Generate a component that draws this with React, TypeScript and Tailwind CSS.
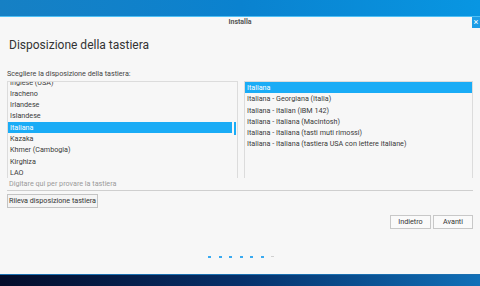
const layouts = [
	"Inglese (USA)",
	"Iracheno",
	"Irlandese",
	"Islandese",
	"Italiana",
	"Kazaka",
	"Khmer (Cambogia)",
	"Kirghiza",
	"LAO",
];

const variants = [
	"Italiana",
	"Italiana - Georgiana (Italia)",
	"Italiana - Italian (IBM 142)",
	"Italiana - Italiana (Macintosh)",
	"Italiana - Italiana (tasti muti rimossi)",
	"Italiana - Italiana (tastiera USA con lettere italiane)",
];

function Row({ label, selected }: { label: string; selected?: boolean }) {
	return (
		<div
			className={
				selected
					? "h-[11.3px] shrink-0 whitespace-nowrap pl-[2px] leading-[11.3px] bg-[#1aacf6] text-white"
					: "h-[11.3px] shrink-0 whitespace-nowrap pl-[2px] leading-[11.3px] text-[#3a3a3a]"
			}
		>
			{label}
		</div>
	);
}

export default function App() {
	return (
		<div className="flex h-[286px] w-[480px] flex-col overflow-hidden font-['Roboto',sans-serif] text-[7.2px]">
			<div className="h-[16px] shrink-0 bg-gradient-to-r from-[#1680c4] via-[#0a82cf] to-[#0896e2]" />
			<div className="relative flex flex-1 flex-col border-t border-[#4fc0f5] bg-[#f7f7f7]">
				<div className="absolute right-0 top-0 flex h-[11px] w-[8px] items-center justify-center bg-[#1c9de6] text-[9px] leading-none text-white">
					×
				</div>
				<div className="h-[10px] text-center text-[7px] font-bold leading-[10px] text-[#555]">Installa</div>
				<h1 className="ml-[9px] mt-[9px] text-[12px] leading-[18px] text-[#333]">
					Disposizione della tastiera
				</h1>
				<p className="ml-[7px] mt-[15px] leading-[10px] text-[#444]">
					Scegliere la disposizione della tastiera:
				</p>
				<div className="mx-[7px] mt-[2px] flex h-[97px] gap-[6px]">
					<div className="relative w-[231px] overflow-hidden border-l border-r border-t border-[#dcdcdc]">
						<div className="-mt-[5.5px] flex flex-col pr-[5px]">
							{layouts.map((l) => (
								<Row key={l} label={l} selected={l === "Italiana"} />
							))}
						</div>
						<div className="absolute right-[1px] top-[40px] h-[13px] w-[2px] bg-[#1aacf6]" />
					</div>
					<div className="flex-1 overflow-hidden border-l border-r border-t border-[#dcdcdc]">
						<div className="flex flex-col">
							{variants.map((v) => (
								<Row key={v} label={v} selected={v === "Italiana"} />
							))}
						</div>
					</div>
				</div>
				<div className="mx-[7px] h-[13px] border-b border-[#cfcfcf] pl-[2px] leading-[12px] text-[#9a9a9a]">
					Digitare qui per provare la tastiera
				</div>
				<div className="ml-[7px] mt-[3px]">
					<button className="h-[14px] w-[91px] whitespace-nowrap border border-[#c4c4c4] bg-[#f4f4f4] leading-[12px] text-[#333]">
						Rileva disposizione tastiera
					</button>
				</div>
				<div className="mr-[7px] mt-[7px] flex justify-end gap-[2px]">
					<button className="h-[14px] w-[41px] border border-[#c8c8c8] bg-[#fafafa] leading-[12px] text-[#333]">
						Indietro
					</button>
					<button className="h-[14px] w-[40px] border border-[#c8c8c8] bg-[#fafafa] leading-[12px] text-[#333]">
						Avanti
					</button>
				</div>
				<div className="mt-[27px] flex justify-center gap-[7.5px] pl-[2px]">
					{[0, 1, 2, 3, 4, 5].map((i) => (
						<div key={i} className="h-[2px] w-[3px] bg-[#3aaaf0]" />
					))}
					<div className="h-[1px] w-[3px] bg-[#d0d0d0]" />
				</div>
			</div>
			<div className="h-[12px] shrink-0 border-t border-[#1a6fb0] bg-gradient-to-r from-[#030c2a] via-[#06306a] to-[#1170b8]" />
		</div>
	);
}
